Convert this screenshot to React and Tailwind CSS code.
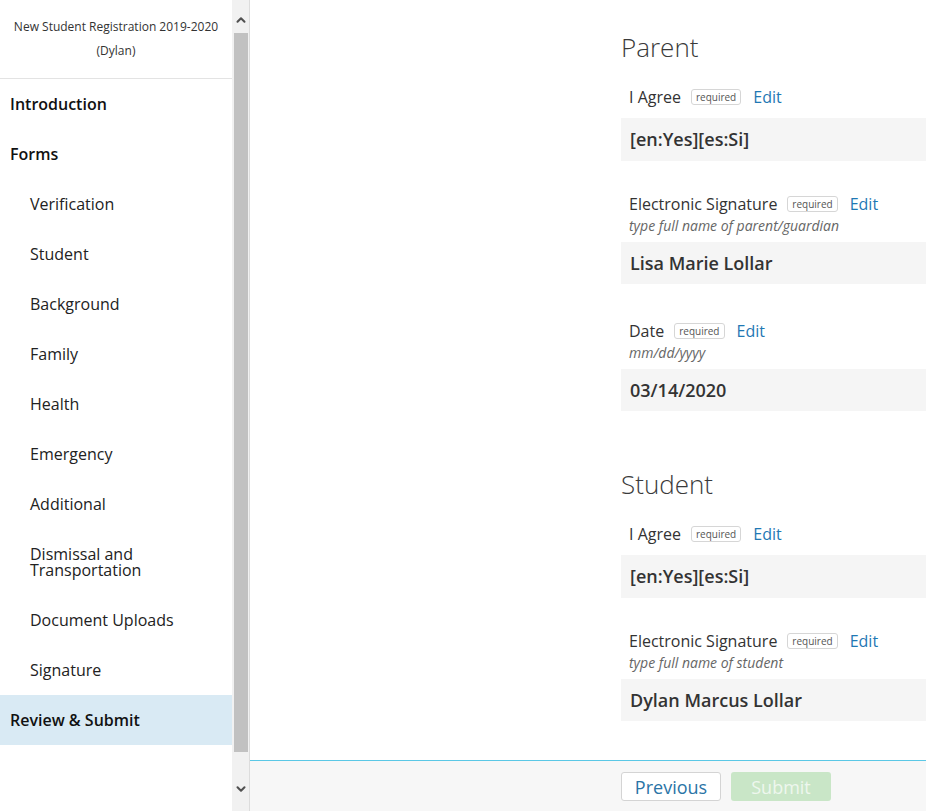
import { ChevronUp, ChevronDown } from "lucide-react";

const navItems = [
  { label: "Introduction", top: true },
  { label: "Forms", top: true },
  { label: "Verification" },
  { label: "Student" },
  { label: "Background" },
  { label: "Family" },
  { label: "Health" },
  { label: "Emergency" },
  { label: "Additional" },
  { label: "Dismissal and Transportation" },
  { label: "Document Uploads" },
  { label: "Signature" },
  { label: "Review & Submit", top: true, active: true },
];

const sections = [
  {
    title: "Parent",
    fields: [
      { label: "I Agree", value: "[en:Yes][es:Si]" },
      { label: "Electronic Signature", hint: "type full name of parent/guardian", value: "Lisa Marie Lollar" },
      { label: "Date", hint: "mm/dd/yyyy", value: "03/14/2020", wide: true },
    ],
  },
  {
    title: "Student",
    fields: [
      { label: "I Agree", value: "[en:Yes][es:Si]" },
      { label: "Electronic Signature", hint: "type full name of student", value: "Dylan Marcus Lollar" },
    ],
  },
];

function Field({ field, first }) {
  const spacing = first ? "mt-[21px]" : field.wide ? "mt-[35px]" : "mt-[31px]";
  return (
    <div className={spacing}>
      <div className="flex items-center pl-2 h-6">
        <span className="text-[16px] text-[#333]">{field.label}</span>
        <span className="ml-[10px] border border-[#d6d6d6] rounded-[3px] px-[4px] h-[16px] leading-[14px] text-[10px] text-[#555]">
          required
        </span>
        <a className="ml-[12px] text-[16px] text-[#1f78b4]">Edit</a>
      </div>
      {field.hint && (
        <div className="pl-2 text-[14px] leading-5 italic text-[#666]">{field.hint}</div>
      )}
      <div className={`${field.hint ? "mt-[6px] h-[42px]" : "mt-[9px] h-[43px]"} bg-[#f5f5f5] flex items-center pl-[9px] text-[18px] font-semibold text-[#333]`}>
        {field.value}
      </div>
    </div>
  );
}

export default function App() {
  return (
    <div className="flex h-[811px] w-[926px] overflow-hidden bg-white font-['Open_Sans',sans-serif]">
      {/* sidebar */}
      <div className="w-[232px] shrink-0 flex flex-col">
        <div className="text-center text-[12px] leading-6 text-[#333] pt-[15px] pb-[15px] border-b border-[#e3e3e3]">
          New Student Registration 2019-2020
          <br />
          (Dylan)
        </div>
        {navItems.map((item) => (
          <div
            key={item.label}
            className={`py-[17px] text-[16px] leading-4 ${item.top ? "pl-[10px] font-semibold text-[#111]" : "pl-[30px] pr-10 text-[#222]"} ${item.active ? "bg-[#d9eaf4]" : ""}`}
          >
            {item.label}
          </div>
        ))}
      </div>

      {/* scrollbar */}
      <div className="w-[17px] shrink-0 bg-[#f1f1f1] flex flex-col items-center">
        <div className="h-[33px] flex items-end justify-center pb-[6px] text-[#505050]">
          <ChevronUp size={14} strokeWidth={3.5} />
        </div>
        <div className="w-[14px] h-[719px] bg-[#c1c1c1]" />
        <div className="flex-1 flex items-start justify-center pt-[30px] text-[#505050]">
          <ChevronDown size={14} strokeWidth={3.5} />
        </div>
      </div>
      <div className="w-px shrink-0 bg-[#dcdcdc]" />

      {/* main */}
      <div className="flex-1 flex flex-col min-w-0">
        <div className="flex-1 overflow-hidden pl-[371px] pt-[30px]">
          {sections.map((s, i) => (
            <div key={s.title} className={i > 0 ? "mt-[56px]" : ""}>
              <h2 className="text-[26px] leading-[34px] font-light text-[#3a3a3a]">{s.title}</h2>
              {s.fields.map((f, j) => (
                <Field key={f.label} field={f} first={j === 0} />
              ))}
            </div>
          ))}
        </div>
        <div className="h-[51px] shrink-0 border-t border-[#5bc8e6] bg-[#f7f7f7] flex items-start pt-[11px] pl-[371px] gap-[10px]">
          <button className="w-[100px] h-[29px] bg-white border border-[#d4d4d4] rounded-[3px] text-[18px] leading-none text-[#2a74a6]">
            Previous
          </button>
          <button className="w-[100px] h-[29px] bg-[#c9e6c7] rounded-[3px] text-[18px] leading-none text-[#eef7ee]">
            Submit
          </button>
        </div>
      </div>
    </div>
  );
}
